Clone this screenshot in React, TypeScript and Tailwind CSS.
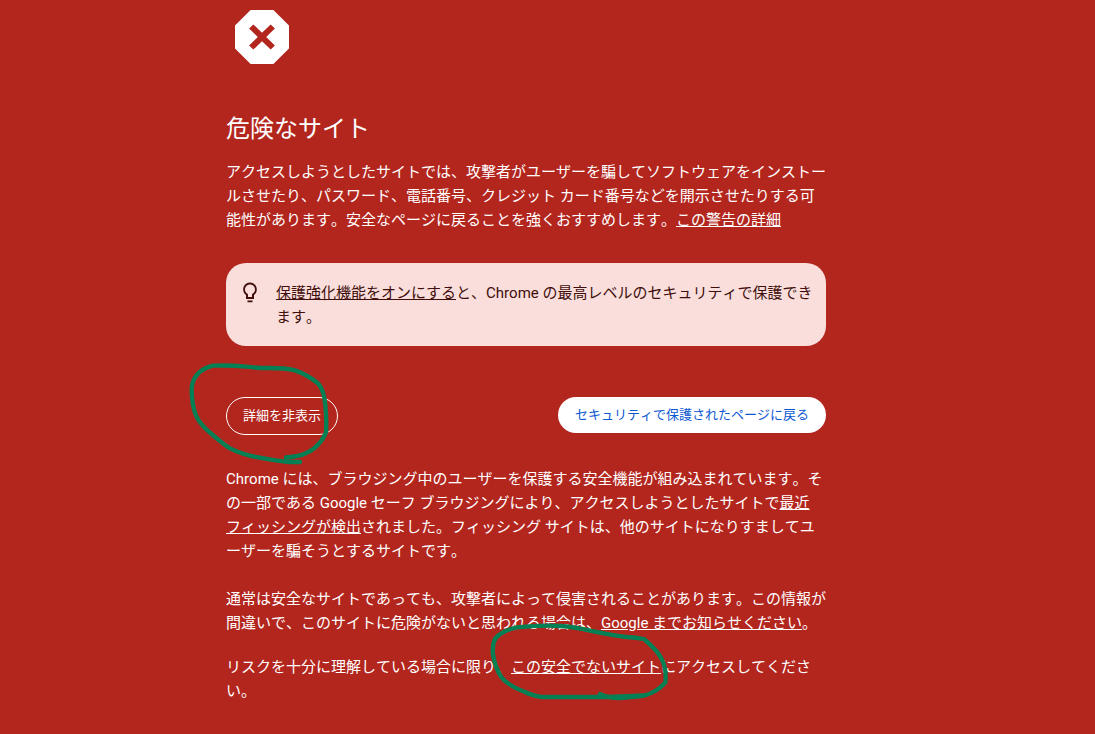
import React from 'react';

interface TextLinkProps {
  href?: string;
  children: React.ReactNode;
}

const TextLink: React.FC<TextLinkProps> = ({ href = '#', children }) => (
  <a href={href} className="underline">
    {children}
  </a>
);

const DangerIcon = () => (
  <svg viewBox="0 0 24 24" className="block w-[72px] h-[72px] fill-white" aria-hidden="true">
    <path d="M8.2 3 3 8.2v7.6L8.2 21h7.6L21 15.8V8.2L15.8 3zM16.3 14.8l-1.4 1.4L12 13.4l-2.9 2.8-1.4-1.4 2.9-2.8-2.9-2.8 1.4-1.4L12 10.6l2.9-2.8 1.4 1.4-2.9 2.8z" />
  </svg>
);

const BulbIcon = () => (
  <svg viewBox="0 0 24 24" className="w-6 h-6 shrink-0 fill-[#410e0b]" aria-hidden="true">
    <path d="M9.5 19.5h5v1.8h-5zM12 1.5C8.14 1.5 5.2 4.64 5.2 8.5c0 2.38 1.1 4.2 2.8 5.5v4h8v-4c1.7-1.3 2.8-3.12 2.8-5.5 0-3.86-2.94-7-6.8-7zm2.85 11.1l-.85.6v2.8h-4v-2.8l-.85-.6C7.8 11.66 7 10.13 7 8.5c0-2.76 2.24-5 5-5s5 2.24 5 5c0 1.63-.8 3.16-2.15 4.1z" />
  </svg>
);

// Hand-drawn marker loops laid over the controls they point at
const ButtonMarker = () => (
  <svg
    viewBox="0 0 540 345"
    className="absolute -left-[46px] -top-[42px] w-[180px] h-[115px] max-w-none pointer-events-none fill-none stroke-[#058055]"
    strokeWidth="13"
    strokeLinecap="round"
    strokeLinejoin="round"
    aria-hidden="true"
  >
    <path d="M360 321 L330 321 Q290 318 240 308 Q190 300 150 280 Q130 268 90 233 Q60 208 48 182 Q35 150 35 100 Q37 70 60 50 Q80 36 98 32 Q150 30 200 35 Q230 39 260 39 Q310 38 345 46 Q385 60 415 86 Q432 105 436 150 Q440 190 438 232 Q430 255 405 278 Q375 305 318 307" />
  </svg>
);

const LinkMarker = () => (
  <svg
    viewBox="0 0 1050 390"
    className="absolute left-[254px] -top-[74px] w-[350px] h-[130px] max-w-none pointer-events-none fill-none stroke-[#058055]"
    strokeWidth="13"
    strokeLinecap="round"
    strokeLinejoin="round"
    aria-hidden="true"
  >
    <path d="M360 339 Q385 352 420 351 Q450 350 492 344 Q530 334 556 305 Q560 265 547 238 Q535 210 492 174 Q470 169 440 168 Q390 162 330 149 Q280 137 240 135 Q180 132 110 139 Q65 150 46 172 Q36 190 39 220 Q45 260 65 290 Q85 314 135 333 Q155 343 185 348 L340 348 Q430 347 490 343" />
  </svg>
);

export default function App() {
  return (
    <div
      lang="ja"
      className="min-h-screen bg-[#b3261e] pr-[43px] pt-px pb-8 text-[15px] leading-6 text-white font-['Roboto','Noto_Sans_CJK_JP',sans-serif] [font-kerning:none]"
    >
      <main className="mx-auto max-w-[600px]">
        <DangerIcon />
        <h1 className="mt-10 text-2xl leading-8">危険なサイト</h1>
        <p className="mt-[15px]">
          アクセスしようとしたサイトでは、攻撃者がユーザーを騙してソフトウェアをインストールさせたり、パスワード、電話番号、クレジット カード番号などを開示させたりする可能性があります。安全なページに戻ることを強くおすすめします。<TextLink>この警告の詳細</TextLink>
        </p>

        {/* Enhanced protection promo */}
        <div className="mt-[31px] flex gap-3.5 rounded-[20px] bg-[#f9dedc] pt-[18px] pb-[17px] pl-3 pr-2 text-[#410e0b]">
          <BulbIcon />
          <p>
            <TextLink>保護強化機能をオンにする</TextLink>と、Chrome の最高レベルのセキュリティで保護できます。
          </p>
        </div>

        <div className="mt-[51px] flex flex-wrap items-start justify-between gap-3 text-[13px]">
          <div className="relative">
            <button
              type="button"
              aria-expanded="true"
              aria-controls="details"
              className="block h-[38px] rounded-full border border-white px-4"
            >
              詳細を非表示
            </button>
            <ButtonMarker />
          </div>
          <button type="button" className="h-9 rounded-full bg-white px-[17px] text-[#0b57d0]">
            セキュリティで保護されたページに戻る
          </button>
        </div>

        <div id="details" className="mt-8">
          <p>
            Chrome には、ブラウジング中のユーザーを保護する安全機能が組み込まれています。その一部である Google セーフ ブラウジングにより、アクセスしようとしたサイトで<TextLink>最近<br />フィッシングが検出</TextLink>されました。フィッシング サイトは、他のサイトになりすましてユーザーを騙そうとするサイトです。
          </p>
          <p className="mt-6">
            通常は安全なサイトであっても、攻撃者によって侵害されることがあります。この情報が間違いで、このサイトに危険がないと思われる場合は、<TextLink>Google までお知らせください</TextLink>。
          </p>
          <div className="relative mt-5">
            <p>
              リスクを十分に理解している場合に限り、<TextLink>この安全でないサイト</TextLink>にアクセスしてください。
            </p>
            <LinkMarker />
          </div>
        </div>
      </main>
    </div>
  );
}
